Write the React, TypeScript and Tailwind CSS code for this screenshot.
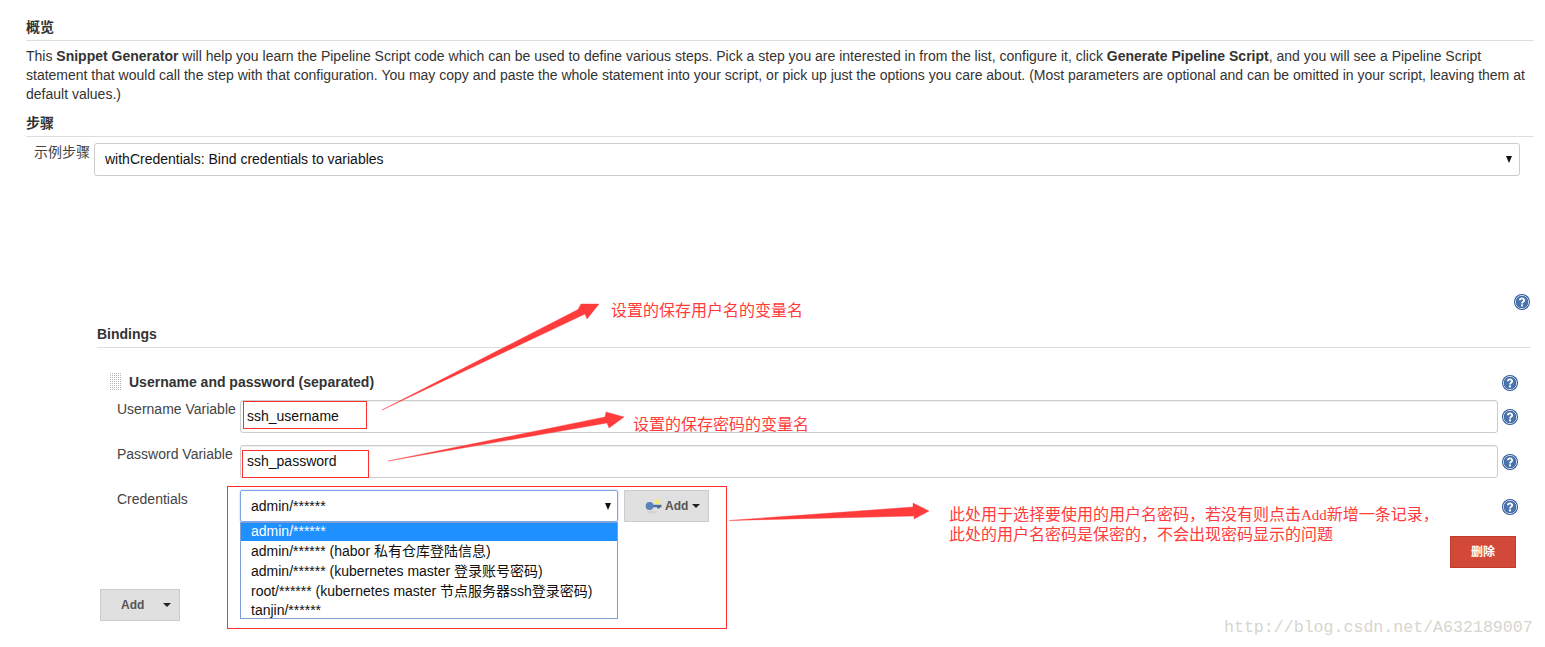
import React from 'react';

const HelpIcon = () => (
  <svg width="16" height="16" viewBox="0 0 16 16" className="shrink-0">
    <circle cx="8" cy="8" r="8" fill="#2f5a9b" />
    <circle cx="8" cy="8" r="6.6" fill="none" stroke="#dfe8f3" strokeWidth="0.9" />
    <circle cx="8" cy="8" r="5.8" fill="#4a74ad" />
    <path d="M5.9 6.3 C5.9 3.8 10.2 3.8 10.2 6.2 C10.2 7.8 8 7.7 8 9.4" fill="none" stroke="#fff" strokeWidth="1.8" />
    <rect x="7" y="10.4" width="2" height="2" fill="#fff" />
  </svg>
);

const Caret = () => (
  <span className="inline-block w-0 h-0 border-x-[4px] border-x-transparent border-t-[4px] border-t-[#222]" />
);

const SelectArrow = () => (
  <span className="w-0 h-0 border-x-[3.5px] border-x-transparent border-t-[7px] border-t-[#111]" />
);

// перетаскиваемая ручка слева от заголовка
const DragHandle = () => (
  <svg width="12" height="18" viewBox="0 0 12 18" className="shrink-0">
    <defs>
      <pattern id="dots" width="2" height="2" patternUnits="userSpaceOnUse">
        <rect width="1" height="1" fill="#b9b9b9" />
      </pattern>
    </defs>
    <rect width="12" height="18" fill="url(#dots)" />
  </svg>
);

const KeyIcon = () => (
  <svg width="17" height="16" viewBox="0 0 17 16" className="shrink-0">
    <ellipse cx="7" cy="14" rx="6" ry="1.4" fill="#d4d4d4" />
    <circle cx="12" cy="3.8" r="2.6" fill="#f4ec7a" />
    <rect x="6" y="6.8" width="10.5" height="2.4" fill="#4a6f9f" />
    <rect x="12" y="9" width="3" height="1.4" fill="#4a6f9f" />
    <circle cx="4.6" cy="8" r="3.9" fill="#5b82b4" />
  </svg>
);

const options = [
  'admin/****** (habor 私有仓库登陆信息)',
  'admin/****** (kubernetes master 登录账号密码)',
  'root/****** (kubernetes master 节点服务器ssh登录密码)',
  'tanjin/******',
];

const FieldRow = ({ label, value }: { label: string; value: string }) => (
  <div className="flex h-[33px]">
    <label className="w-[143px] pl-[20px] text-[14px] leading-[19px] text-[#444]">{label}</label>
    <input
      readOnly
      defaultValue={value}
      className="flex-1 min-w-0 h-[33px] border border-[#ccc] rounded-[3px] pl-[6px] pb-[2px] text-[14px] text-[#111] shadow-[inset_0_1px_1px_rgba(0,0,0,0.07)] outline-none"
    />
    <div className="w-[32px] flex items-center pl-[4px] pt-[1px]">
      <HelpIcon />
    </div>
  </div>
);

const Annotations = () => (
  <>
    <svg width="1545" height="647" className="absolute left-0 top-0 pointer-events-none">
      <g fill="#ff3b3b" stroke="#ff3b3b" strokeWidth="0.4">
        <polygon points="382,410 578,309.5 581,304 599,304 587,319 585,314" />
        <polygon points="388,461 605,417 606,412 624,417 609,428 607,423" />
        <polygon points="729,520.5 913,507 913,503 929,511 914,519 914,516" />
      </g>
    </svg>
    <div className="absolute left-[243px] top-[401px] w-[124px] h-[28px] border border-[#ff2f2f]" />
    <div className="absolute left-[242px] top-[450px] w-[127px] h-[28px] border border-[#ff2f2f]" />
    <div className="absolute left-[227px] top-[486px] w-[500px] h-[143px] border border-[#ff2f2f]" />
    <span className="absolute left-[611px] top-[301px] text-[16px] leading-[20px] text-[#ff3b3b] whitespace-nowrap">设置的保存用户名的变量名</span>
    <span className="absolute left-[633px] top-[415px] text-[16px] leading-[20px] text-[#ff3b3b] whitespace-nowrap">设置的保存密码的变量名</span>
    <div className="absolute left-[949px] top-[505px] text-[16px] leading-[20px] text-[#ff3b3b] whitespace-nowrap">
      <p>此处用于选择要使用的用户名密码，若没有则点击<span className="font-['Liberation_Serif',serif] text-[15px]">Add</span>新增一条记录，</p>
      <p>此处的用户名密码是保密的，不会出现密码显示的问题</p>
    </div>
    <span className="absolute left-[1224px] top-[618px] font-['Liberation_Mono',monospace] text-[16.6px] leading-[20px] text-[#d6d6ce] whitespace-nowrap">
      http://blog.csdn.net/A632189007
    </span>
  </>
);

export default function App() {
  return (
    <div className="relative h-[647px] w-[1545px] overflow-hidden bg-white font-['Liberation_Sans','Noto_Sans_CJK_SC',sans-serif] text-[14px] text-[#333]">
      <div className="pl-[26px] pr-[12px]">
        {/* Описание */}
        <div className="h-[41px] pt-[18px] border-b border-[#ddd] text-[14px] leading-[19px] font-bold">概览</div>
        <p className="mt-[6px] text-[14px] leading-[19px]">
          This <b>Snippet Generator</b> will help you learn the Pipeline Script code which can be used to define various steps. Pick a step you are interested in from the list, configure it, click <b>Generate Pipeline Script</b>, and you will see a Pipeline Script statement that would call the step with that configuration. You may copy and paste the whole statement into your script, or pick up just the options you care about. (Most parameters are optional and can be omitted in your script, leaving them at default values.)
        </p>
        <div className="h-[33px] pt-[10px] border-b border-[#ddd] text-[14px] leading-[19px] font-bold">步骤</div>

        {/* Выбор шага */}
        <div className="flex mt-[6px] pr-[13px]">
          <label className="w-[68px] pl-[8px] text-[14px] leading-[19px] text-[#444]">示例步骤</label>
          <div className="flex-1 h-[33px] flex items-center justify-between border border-[#ccc] rounded-[3px] pl-[10px] pr-[7px] text-[14px] text-[#111]">
            <span>withCredentials: Bind credentials to variables</span>
            <SelectArrow />
          </div>
        </div>
      </div>

      <div className="flex justify-end mt-[118px] pr-[15px]">
        <HelpIcon />
      </div>

      {/* Bindings */}
      <div className="ml-[97px] mr-[15px]">
        <div className="h-[38px] pt-[15px] border-b border-[#ddd] text-[14px] leading-[19px] font-bold">Bindings</div>
        <div className="flex items-center h-[18px] mt-[25px] pl-[13px]">
          <DragHandle />
          <span className="ml-[7px] flex-1 text-[14px] leading-[18px] font-bold">Username and password (separated)</span>
          <div className="w-[32px] flex pl-[4px] pt-[2px]">
            <HelpIcon />
          </div>
        </div>

        <div className="mt-[9px] flex flex-col gap-[12px]">
          <FieldRow label="Username Variable" value="ssh_username" />
          <FieldRow label="Password Variable" value="ssh_password" />
        </div>

        {/* Credentials */}
        <div className="flex mt-[12px] h-[32px]">
          <label className="w-[143px] pl-[20px] text-[14px] leading-[19px] text-[#444]">Credentials</label>
          <div className="relative w-[378px] h-[32px]">
            <div className="h-[32px] flex items-center justify-between border border-[#7fa5e6] rounded-[2px] shadow-[0_0_2px_#9dbcf0] pl-[10px] pr-[6px] text-[14px] text-[#111]">
              <span>admin/******</span>
              <SelectArrow />
            </div>
            <ul className="absolute left-0 top-[32px] w-[378px] h-[97px] border border-[#7f9fd6] bg-white text-[14px] leading-[20px] text-[#111]">
              <li className="h-[18px] pl-[10px] bg-[#1e90ff] text-white leading-[16px]">admin/******</li>
              {options.map((o) => (
                <li key={o} className="h-[20px] pl-[10px] whitespace-nowrap last:h-[18px] last:leading-[18px]">{o}</li>
              ))}
            </ul>
          </div>
          <button className="ml-[6px] w-[85px] h-[32px] flex items-center pl-[20px] bg-[#e0e0e0] border border-[#ccc] text-[12px] font-bold text-[#555]">
            <KeyIcon />
            <span className="ml-[3px]">Add</span>
            <span className="ml-[4px] flex"><Caret /></span>
          </button>
          <div className="ml-auto w-[32px] flex items-center pl-[4px] pt-[2px]">
            <HelpIcon />
          </div>
        </div>

        <div className="flex justify-end mt-[14px] pr-[14px]">
          <button className="w-[66px] h-[32px] bg-[#d24939] border border-[#c23c2d] text-[12px] font-bold text-white">删除</button>
        </div>

        <button className="mt-[21px] ml-[3px] w-[80px] h-[32px] flex items-center pl-[20px] bg-[#e0e0e0] border border-[#ccc] text-[12px] font-bold text-[#555]">
          <span>Add</span>
          <span className="ml-[19px] flex"><Caret /></span>
        </button>
      </div>

      <Annotations />
    </div>
  );
}
